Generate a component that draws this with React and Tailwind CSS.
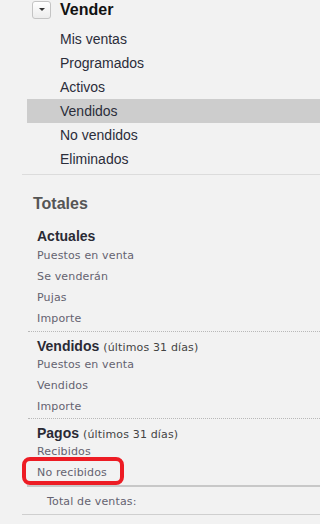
import React from 'react'

const arial = { fontFamily: '"Liberation Sans", Arial, sans-serif' }
const verdana = { fontFamily: '"DejaVu Sans", Verdana, sans-serif' }

const menu = ['Mis ventas', 'Programados', 'Activos', 'Vendidos', 'No vendidos', 'Eliminados']

const SubItem = ({ children }) => (
  <div className="h-[21px] leading-[21px] pl-[37px] text-[11px] tracking-[0.15px] text-[#646270]" style={verdana}>
    {children}
  </div>
)

const SectionTitle = ({ title, note }) => (
  <div className="h-[18px] leading-[18px] pl-[37px] whitespace-nowrap">
    <span className="text-[14px] font-bold text-[#2a2a35]" style={arial}>{title}</span>
    {note && (
      <span className="text-[11px] tracking-[0.15px] text-[#444] ml-[4px]" style={verdana}>{note}</span>
    )}
  </div>
)

export default function App() {
  return (
    <div className="relative w-full min-w-[232px] h-[524px] bg-[#f2f2f2] overflow-hidden">
      {/* Vender header */}
      <div className="flex items-center h-[19px] pl-[32px]">
        <button className="w-[19px] h-[18px] rounded-[3px] border border-[#c4c4c4] bg-gradient-to-b from-white to-[#ececec] flex items-center justify-center">
          <span className="block w-0 h-0 border-l-[3px] border-r-[3px] border-t-[3px] border-l-transparent border-r-transparent border-t-[#333]" />
        </button>
        <span className="ml-[9px] text-[16px] font-bold text-[#111] leading-[19px]" style={arial}>
          Vender
        </span>
      </div>

      {/* menu */}
      <ul className="mt-[8px]">
        {menu.map(item => (
          <li
            key={item}
            className={`ml-[27px] pl-[33px] h-[24px] leading-[24px] text-[14px] text-[#2b2d3a] ${item === 'Vendidos' ? 'bg-[#cdcdcd]' : ''}`}
            style={arial}
          >
            {item}
          </li>
        ))}
      </ul>

      <div className="mt-[3px] ml-[22px] border-t border-[#dcdcdc]" />

      {/* Totales */}
      <div className="mt-[19px] pl-[33px] h-[20px] leading-[20px] text-[16px] font-bold text-[#555]" style={arial}>
        Totales
      </div>

      <div className="mt-[14px]">
        <div className="h-[17px] leading-[17px] pl-[37px] text-[14px] font-bold text-[#2a2a35]" style={arial}>
          Actuales
        </div>
        <SubItem>Puestos en venta</SubItem>
        <SubItem>Se venderán</SubItem>
        <SubItem>Pujas</SubItem>
        <SubItem>Importe</SubItem>
      </div>

      <div className="mt-[2px] ml-[28px] border-t border-dotted border-[#b8b8b8]" />

      <div className="mt-[4px]">
        <SectionTitle title="Vendidos" note="(últimos 31 días)" />
        <SubItem>Puestos en venta</SubItem>
        <SubItem>Vendidos</SubItem>
        <SubItem>Importe</SubItem>
      </div>

      <div className="mt-[1px] ml-[28px] border-t border-dotted border-[#b8b8b8]" />

      <div className="mt-[4px]">
        <SectionTitle title="Pagos" note="(últimos 31 días)" />
        <SubItem>Recibidos</SubItem>
        <SubItem>No recibidos</SubItem>
      </div>

      <div className="mt-[2px] ml-[27px] border-t-2 border-[#c8c8c8]" />

      <div className="mt-[4px] h-[21px] leading-[21px] pl-[47px] text-[11px] tracking-[0.15px] text-[#646270]" style={verdana}>
        Total de ventas:
      </div>

      <div className="mt-[2px] ml-[22px] border-t border-[#cfcfcf]" />

      {/* red annotation */}
      <div className="absolute left-[22px] top-[457px] w-[102px] h-[28px] border-[4px] border-[#ed1c24] rounded-[8px]" />
    </div>
  )
}
